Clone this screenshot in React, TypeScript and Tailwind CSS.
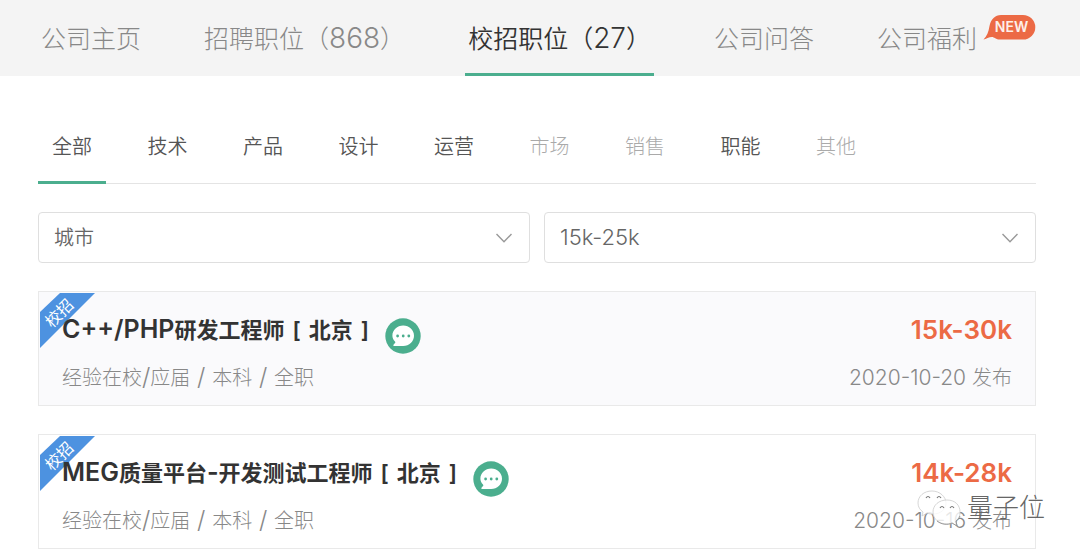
import { useState } from "react";
import clsx from "clsx";

interface IJob {
    id: number;
    title: string;
    city: string;
    tags: string;
    salary: string;
    date: string;
}

const NAV_TABS = [
    { name: "公司主页" },
    { name: "招聘职位（868）" },
    { name: "校招职位（27）" },
    { name: "公司问答" },
    { name: "公司福利", isNew: true },
];

const CATEGORIES = [
    { name: "全部" },
    { name: "技术" },
    { name: "产品" },
    { name: "设计" },
    { name: "运营" },
    { name: "市场", disabled: true },
    { name: "销售", disabled: true },
    { name: "职能" },
    { name: "其他", disabled: true },
];

const JOBS: IJob[] = [
    { id: 1, title: "C++/PHP研发工程师", city: "北京", tags: "经验在校/应届 / 本科 / 全职", salary: "15k-30k", date: "2020-10-20" },
    { id: 2, title: "MEG质量平台-开发测试工程师", city: "北京", tags: "经验在校/应届 / 本科 / 全职", salary: "14k-28k", date: "2020-10-16" },
];

// latin letters and digits run a little larger than the chinese text beside them
const MixedText = ({ text, latinClass }: { text: string; latinClass: string }) => (
    <>
        {text.split(/([\x20-\x7e]+)/).map((part, index) =>
            index % 2 ? <span key={index} className={clsx("leading-none", latinClass)}>{part}</span> : part
        )}
    </>
);

const NewBadge = () => (
    <span className="absolute left-full top-0 ml-1.5 -mt-1.5 h-[25px] w-[53px]">
        <svg viewBox="0 0 53 25" className="absolute inset-0 h-full w-full" aria-hidden="true">
            <path d="M18 0H40a12.3 12.3 0 0 1 0 24.600H17c-4 0-6-2.600-8-2.600-3 0-6 2-8.500 2.500C4 21 5.500 17 6.500 11 8 4 12 0 18 0Z" fill="#ec6a45" />
        </svg>
        <span className="absolute inset-0 flex items-center justify-center pl-1 text-sm font-semibold text-[#fdf0ea]">NEW</span>
    </span>
);

const FilterSelect = ({ label, options, large }: { label: string; options: string[]; large?: boolean }) => (
    <div className="relative flex-1">
        <select
            aria-label={label}
            className={clsx("h-[51px] w-full appearance-none rounded-sm border border-[#dfdfdf] bg-white px-[15px] font-[350] text-[#666]", large ? "text-[22px]" : "text-xl")}
        >
            {options.map((option) => <option key={option}>{option}</option>)}
        </select>
        <svg viewBox="0 0 16 10" className="pointer-events-none absolute right-[18px] top-[21px] h-2.5 w-4" fill="none" stroke="#999" strokeWidth="1.4" aria-hidden="true">
            <path d="M.5 1 8 8.8 15.5 1" />
        </svg>
    </div>
);

const ChatButton = () => (
    <button type="button" aria-label="聊天" className="mt-[5px] h-9 w-9 shrink-0">
        <svg viewBox="0 0 36 36" className="h-full w-full">
            <circle cx="18" cy="18" r="17.7" fill="#4bae8e" />
            <path d="M18.200 7.500c6 0 10.800 4.500 10.800 10.200S24.200 28 18.200 28H9.300c-1 0-1.300-.9-.6-1.600l1.300-1.300c.5-.6.4-1.100 0-1.700-1.700-1.600-2.600-3.600-2.600-5.700 0-5.700 4.800-10.200 10.800-10.200Z" fill="#fff" />
            <circle cx="12.600" cy="18" r="1.400" fill="#4bae8e" />
            <circle cx="18.200" cy="18" r="1.400" fill="#4bae8e" />
            <circle cx="23.800" cy="18" r="1.400" fill="#4bae8e" />
        </svg>
    </button>
);

const CampusRibbon = () => (
    <span className="absolute left-px top-px h-[55px] w-[55px]">
        <svg viewBox="0 0 55 55" className="absolute inset-0 h-full w-full" aria-hidden="true">
            <path d="M20 0H55L0 55V19Z" fill="#4d92e0" />
        </svg>
        <span className="absolute left-[3px] top-2.5 -rotate-45 text-base leading-5 text-white">校招</span>
    </span>
);

const JobCard = ({ job, highlighted }: { job: IJob; highlighted: boolean }) => (
    <li className={clsx("relative border border-[#e9e9e9] px-[23px] pb-[11px] pt-[21px]", highlighted ? "bg-[#fafafc]" : "bg-white")}>
        <CampusRibbon />
        <div className="relative flex h-[49px] items-start justify-between">
            <div className="flex items-start gap-4">
                <h3 className="flex gap-2 text-[22px] font-semibold leading-[34px] text-[#333]">
                    <span><MixedText text={job.title} latinClass="text-[25px]" /></span>
                    <span>[</span>
                    <span>{job.city}</span>
                    <span>]</span>
                </h3>
                <ChatButton />
            </div>
            <span className="text-[26px] font-semibold leading-[34px] text-[#ec6a45]">{job.salary}</span>
        </div>
        <div className="flex justify-between text-xl leading-8 font-light text-[#888]">
            <p><MixedText text={job.tags} latinClass="text-2xl" /></p>
            <p><MixedText text={`${job.date} 发布`} latinClass="text-[21px]" /></p>
        </div>
    </li>
);

const Watermark = () => (
    <div className="pointer-events-none absolute bottom-[23px] right-[35px] flex items-center gap-1.5">
        <svg viewBox="0 0 44 36" className="h-9 w-11" fill="#fff" fillOpacity="0.8" stroke="#ccc" strokeWidth="0.8" aria-hidden="true">
            <path d="M15 1C7 1 1 6 1 13c0 4 2 7 5 9l-1 4 5-3c2 1 4 1 6 1 8 0 13-5 13-11S23 1 15 1Z" />
            <path d="M30 10c-8 0-14 5-14 12s6 12 14 12c2 0 4 0 5-1l5 3-1-5c3-2 4-5 4-9 0-7-5-12-13-12Z" />
            <path d="M20 31c5 4 11 4 15 2l5 3-1-5c2-1 3-3 4-5" fill="none" stroke="#888" />
            <path d="M9 8q2-3 4 0M20 8q2-3 4 0M23 18q2-3 4 0M33 18q2-3 4 0" fill="none" stroke="#777" strokeWidth="1.200" />
        </svg>
        <span className="text-[26px] font-light leading-9 text-[#666]">量子位</span>
    </div>
);

const App = () => {

    const [activeTab, setActiveTab] = useState("校招职位（27）");
    const [activeCategory, setActiveCategory] = useState("全部");

    return (
        <div className="relative bg-white font-['Inter','Noto_Sans_CJK_SC',sans-serif]">
            <nav className="flex h-[76px] gap-[57px] bg-[#f4f4f4] pl-[38px]">
                {NAV_TABS.map((tab) => (
                    <a
                        key={tab.name}
                        href="#"
                        onClick={() => setActiveTab(tab.name)}
                        className={clsx("flex items-center whitespace-nowrap border-b-3 px-[3px] pt-1.5 text-[25px]",
                            activeTab === tab.name ? "border-[#4bae8e] font-[350] text-[#333]" : "border-transparent font-light text-[#888]")}
                    >
                        <span className="relative">
                            <MixedText text={tab.name} latinClass="text-[28px]" />
                            {tab.isNew && <NewBadge />}
                        </span>
                    </a>
                ))}
            </nav>

            <main className="px-[38px] pt-[33px] pr-11">
                {/* Categories */}
                <div className="flex h-[75px] justify-between border-b border-[#e4e4e4] pr-[166px]">
                    {CATEGORIES.map((category) => (
                        <button
                            key={category.name}
                            type="button"
                            disabled={category.disabled}
                            onClick={() => setActiveCategory(category.name)}
                            className={clsx("-mb-px border-b-3 px-3.5 pt-1 text-xl",
                                activeCategory === category.name ? "border-[#4bae8e]" : "border-transparent",
                                category.disabled ? "font-light text-[#aaa]" : "font-[350] text-[#555]")}
                        >
                            {category.name}
                        </button>
                    ))}
                </div>

                {/* Filters */}
                <div className="mt-7 flex gap-3.5">
                    <FilterSelect label="城市" options={["城市", "北京", "上海"]} />
                    <FilterSelect label="薪资" options={["15k-25k", "25k-50k"]} large />
                </div>

                <ul className="mt-7 flex flex-col gap-7">
                    {JOBS.map((job, index) => <JobCard key={job.id} job={job} highlighted={index === 0} />)}
                </ul>
            </main>
            <Watermark />
        </div>
    )
}

export default App
